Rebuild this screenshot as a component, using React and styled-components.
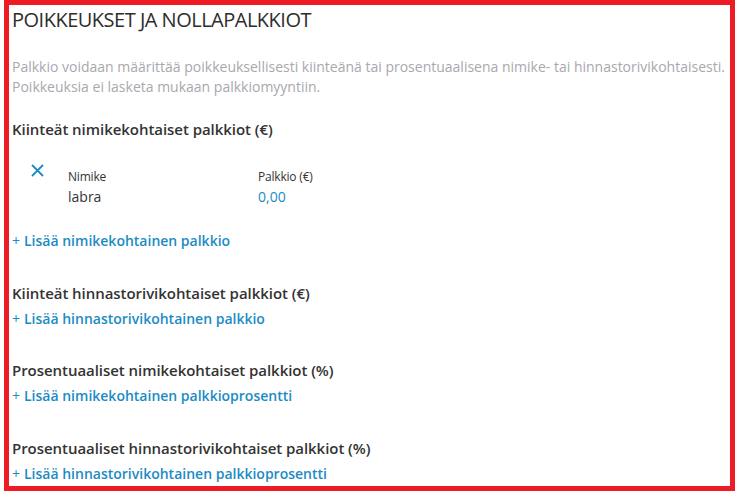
import styled, { createGlobalStyle } from "styled-components";

const GlobalStyle = createGlobalStyle`
  body {
    margin: 0;
    background: #fff;
    font-family: "Open Sans", "Noto Sans", Arial, sans-serif;
  }
`;

const Frame = styled.div`
  box-sizing: border-box;
  width: 731px;
  height: 491px;
  margin-left: 4px;
  border: 5px solid #ed1c24;
  padding: 1px 3px 0;
  color: #333;
`;

const Title = styled.h2`
  margin: 0;
  font-size: 20px;
  font-weight: 400;
  line-height: 27px;
  letter-spacing: -0.5px;
  color: #2d2d2d;
`;

const Intro = styled.p`
  margin: 24px 0 0;
  font-size: 14px;
  line-height: 20px;
  color: #a8a8ae;
  white-space: nowrap;
`;

const Section = styled.section`
  margin-top: ${(p) => p.$gap}px;
`;

const SectionTitle = styled.h3`
  margin: 0;
  font-size: 15px;
  font-weight: 600;
  line-height: 20px;
  letter-spacing: -0.05px;
  color: #333;
`;

const AddLink = styled.a`
  display: inline-block;
  margin-top: ${(p) => p.$top || 6}px;
  font-size: 14px;
  font-weight: 600;
  line-height: 20px;
  color: #1b8bc4;
  cursor: pointer;

  span {
    font-weight: 400;
    margin-right: 4px;
  }
`;

const Table = styled.div`
  display: grid;
  grid-template-columns: 56px 190px auto;
  align-items: center;
  margin-top: 27px;
`;

const RemoveButton = styled.button`
  grid-row: 1 / span 2;
  align-self: start;
  width: 16px;
  height: 16px;
  margin: -2px 0 0 17px;
  padding: 0;
  border: none;
  background: none;
  color: #1b8bc4;
  cursor: pointer;
`;

const ColHead = styled.div`
  font-size: 12px;
  line-height: 18px;
  letter-spacing: -0.2px;
  color: #333;
  padding-top: 2px;
`;

const Cell = styled.div`
  font-size: 14px;
  line-height: 22px;
  color: ${(p) => (p.$value ? "#1b8bc4" : "#333")};
`;

const Cross = () => (
  <svg width="13" height="13" viewBox="0 0 13 13">
    <path d="M1 1 L12 12 M12 1 L1 12" stroke="currentColor" strokeWidth="1.8" fill="none" />
  </svg>
);

const groups = [
  {
    title: "Kiinteät hinnastorivikohtaiset palkkiot (€)",
    link: "Lisää hinnastorivikohtainen palkkio",
    gap: 32,
  },
  {
    title: "Prosentuaaliset nimikekohtaiset palkkiot (%)",
    link: "Lisää nimikekohtainen palkkioprosentti",
    gap: 31,
  },
  {
    title: "Prosentuaaliset hinnastorivikohtaiset palkkiot (%)",
    link: "Lisää hinnastorivikohtainen palkkioprosentti",
    gap: 32,
  },
];

export default function App() {
  return (
    <>
      <GlobalStyle />
      <Frame>
        <Title>POIKKEUKSET JA NOLLAPALKKIOT</Title>
        <Intro>
          Palkkio voidaan määrittää poikkeuksellisesti kiinteänä tai prosentuaalisena nimike- tai
          hinnastorivikohtaisesti.
          <br />
          Poikkeuksia ei lasketa mukaan palkkiomyyntiin.
        </Intro>

        <Section $gap={22}>
          <SectionTitle>Kiinteät nimikekohtaiset palkkiot (€)</SectionTitle>
          <Table>
            <RemoveButton aria-label="Poista">
              <Cross />
            </RemoveButton>
            <ColHead>Nimike</ColHead>
            <ColHead>Palkkio (€)</ColHead>
            <Cell>labra</Cell>
            <Cell $value>0,00</Cell>
          </Table>
          <AddLink $top={23}>
            <span>+</span>Lisää nimikekohtainen palkkio
          </AddLink>
        </Section>

        {groups.map((g) => (
          <Section key={g.title} $gap={g.gap}>
            <SectionTitle>{g.title}</SectionTitle>
            <AddLink>
              <span>+</span>
              {g.link}
            </AddLink>
          </Section>
        ))}
      </Frame>
    </>
  );
}
